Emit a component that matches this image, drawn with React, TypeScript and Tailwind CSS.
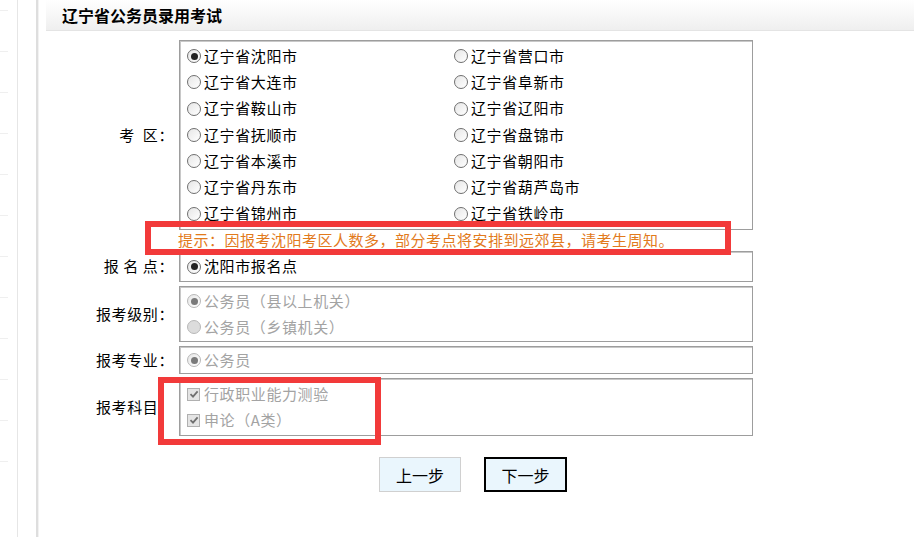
import React from "react";

const font = { fontFamily: '"Noto Sans CJK SC", "Noto Sans", sans-serif' };

const districtsLeft = ["辽宁省沈阳市", "辽宁省大连市", "辽宁省鞍山市", "辽宁省抚顺市", "辽宁省本溪市", "辽宁省丹东市", "辽宁省锦州市"];
const districtsRight = ["辽宁省营口市", "辽宁省阜新市", "辽宁省辽阳市", "辽宁省盘锦市", "辽宁省朝阳市", "辽宁省葫芦岛市", "辽宁省铁岭市"];

function Radio({ checked, disabled }: { checked?: boolean; disabled?: boolean }) {
  const ring = disabled ? "border-[#b8b8b8]" : "border-[#6f6f6f]";
  const bg = disabled && !checked ? "bg-[#dcdcdc]" : "bg-gradient-to-br from-[#e6e6e6] to-white";
  return (
    <span className={`mr-[3px] flex h-[14px] w-[14px] shrink-0 items-center justify-center rounded-full border ${ring} ${bg}`}>
      {checked && <span className={`h-[7px] w-[7px] rounded-full ${disabled ? "bg-[#7a7a7a]" : "bg-[#222]"}`} />}
    </span>
  );
}

function Check() {
  return (
    <span className="mr-[4px] flex h-[13px] w-[13px] shrink-0 items-center justify-center border border-[#b0b0b0] bg-[#e4e4e4]">
      <svg width="10" height="10" viewBox="0 0 10 10">
        <path d="M1.5 5.2 L4 7.6 L8.6 2.4" fill="none" stroke="#6f6f6f" strokeWidth="1.8" />
      </svg>
    </span>
  );
}

function Option({ text, checked, disabled, box, tall }: { text: string; checked?: boolean; disabled?: boolean; box?: boolean; tall?: boolean }) {
  return (
    <div className={`flex items-center ${tall ? "h-[26.25px]" : "h-[26px]"} ${disabled ? "text-[#a3a3a3]" : "text-black"}`}>
      {box ? <Check /> : <Radio checked={checked} disabled={disabled} />}
      <span>{text}</span>
    </div>
  );
}

function Row({ label, children, className }: { label: string; children: React.ReactNode; className?: string }) {
  return (
    <div className="flex items-center">
      <div className="w-[128px] shrink-0 whitespace-pre text-right text-black">{label}</div>
      <div className={`ml-[5px] w-[574px] border border-[#9d9d9d] shadow-[inset_1px_1px_0_#c8c8c8] ${className ?? ""}`}>{children}</div>
    </div>
  );
}

export default function App() {
  return (
    <div className="flex h-[537px] w-[914px] overflow-hidden bg-white text-[15px] tracking-[0.6px]" style={font}>
      {/* left frame strips */}
      <div className="flex w-[18px] shrink-0 flex-col gap-[40px] border-r border-[#e6e6e6] pt-[10px]">
        {[0, 1, 2, 3, 4, 5, 6, 7, 8, 9, 10, 11].map((i) => (
          <div key={i} className="h-px w-[8px] bg-[#efefef]" />
        ))}
      </div>
      <div className="w-[20px] shrink-0 border-r-2 border-[#dedede]" />
      <div className="w-[8px] shrink-0 border-l border-[#f2f2f2]" />

      <div className="flex flex-1 flex-col">
        <div className="flex h-[31px] items-center border-b border-[#e4e4e4] bg-gradient-to-b from-white to-[#efefef] pl-[16px] text-[16px] font-bold tracking-normal text-black">
          辽宁省公务员录用考试
        </div>

        <div className="relative flex flex-col pt-[9px]">
          <Row label="考  区：">
            <div className="grid h-[188px] grid-cols-[267px_1fr] overflow-hidden pl-[7px] pt-[2px]">
              <div>
                {districtsLeft.map((d, i) => (
                  <Option key={d} text={d} checked={i === 0} tall />
                ))}
              </div>
              <div>
                {districtsRight.map((d) => (
                  <Option key={d} text={d} tall />
                ))}
              </div>
            </div>
          </Row>

          <div className="flex h-[21px] items-center pl-[132px] tracking-[0.5px] text-[#e27a1c]">
            提示：因报考沈阳考区人数多，部分考点将安排到远郊县，请考生周知。
          </div>

          <Row label="报 名 点：" className="flex h-[31px] items-center pl-[7px]">
            <Option text="沈阳市报名点" checked />
          </Row>

          <div className="mt-[4px]">
            <Row label="报考级别：" className="h-[56px] pl-[7px] pt-[1px]">
              <Option text="公务员（县以上机关）" checked disabled />
              <Option text="公务员（乡镇机关）" disabled />
            </Row>
          </div>

          <div className="mt-[4px]">
            <Row label="报考专业：" className="flex h-[28px] items-center pl-[7px]">
              <Option text="公务员" checked disabled />
            </Row>
          </div>

          <div className="mt-[4px]">
            <Row label="报考科目：" className="h-[58px] pl-[7px] pt-[2px]">
              <Option text="行政职业能力测验" box disabled />
              <Option text="申论（A类）" box disabled />
            </Row>
          </div>

          <div className="mt-[21px] flex gap-[23px] pl-[333px] tracking-normal">
            <button className="flex h-[35px] w-[82px] items-center justify-center border border-[#d0d0d0] bg-[#eaf6fd] text-[16px] text-black">
              上一步
            </button>
            <button className="flex h-[35px] w-[83px] items-center justify-center border-2 border-black bg-[#eaf6fd] text-[16px] text-black">
              下一步
            </button>
          </div>

          {/* red annotation boxes */}
          <div className="pointer-events-none absolute left-[99px] top-[190px] h-[34px] w-[586px] border-[6px] border-[#f23a3a]" />
          <div className="pointer-events-none absolute left-[112px] top-[346px] h-[68px] w-[223px] border-[6px] border-[#f23a3a]" />
        </div>
      </div>
    </div>
  );
}
